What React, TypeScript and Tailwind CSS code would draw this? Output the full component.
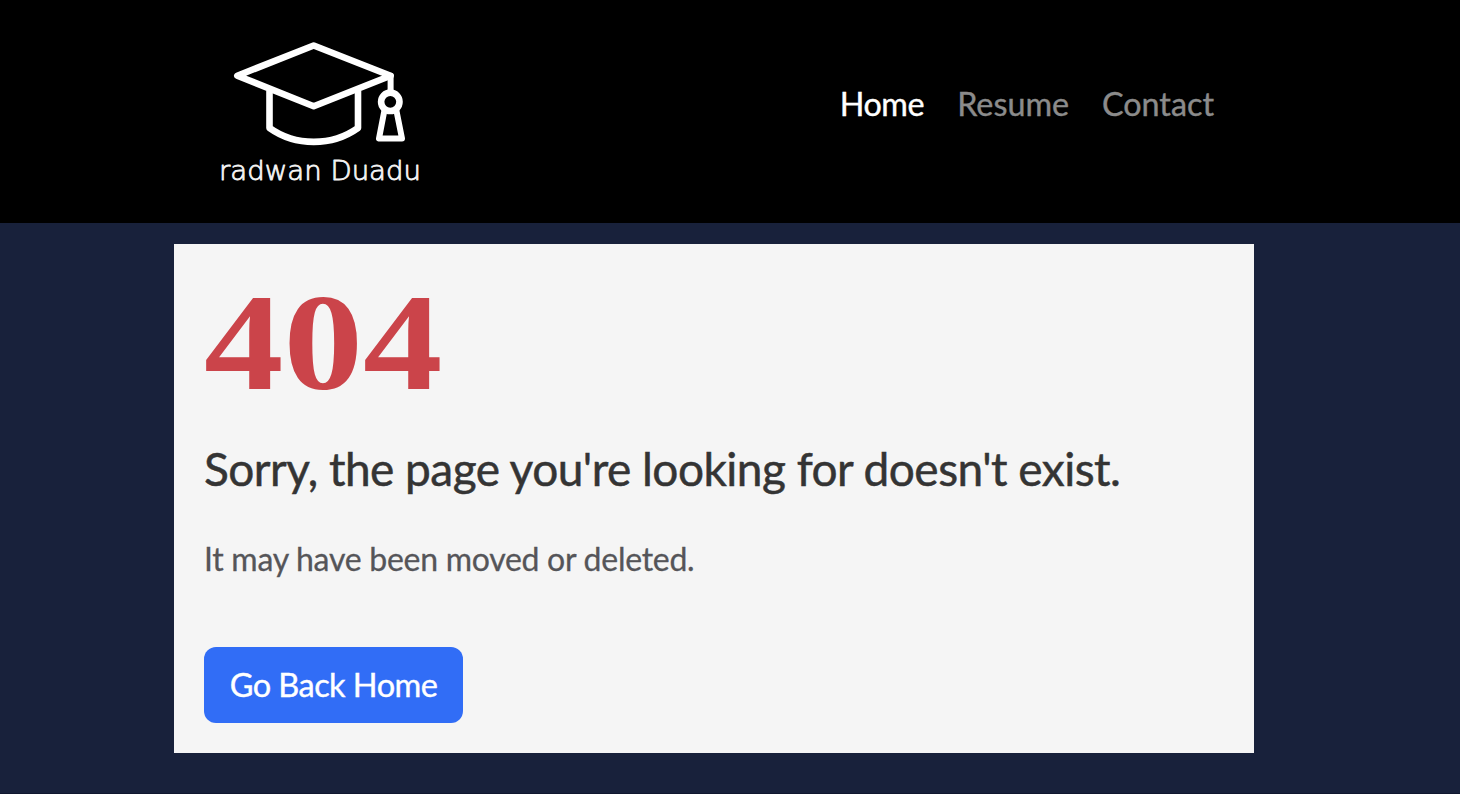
import React from "react";

function Logo() {
  return (
    <svg className="h-[160px] w-[220px]" viewBox="0 0 220 160" fill="none" stroke="#fff" strokeWidth="6.6" strokeLinejoin="round" strokeLinecap="round" role="img">
      <path d="M27.300 45.700 103.700 15.500 180.600 45.700 103.700 76.200Z" />
      <path d="M180.600 45.700v16" strokeWidth="6" />
      <path d="M59.500 61v37c26 18.500 62.500 18.500 88.500 0V61" strokeLinecap="butt" />
      <circle cx="180.300" cy="71.800" r="9.200" />
      <path d="M174.300 81 169 108.500h23L186.500 81" strokeWidth="6" />
      <text x="9" y="149.500" fill="#f4f4f4" stroke="#f4f4f4" strokeWidth="0.8" fontFamily="DejaVu Sans, sans-serif" fontWeight="200" fontSize="26" textLength="202" lengthAdjust="spacingAndGlyphs">
        radwan Duadu
      </text>
    </svg>
  );
}

export default function App() {
  return (
    <div className="min-h-[794px] border-b border-[#10172f] bg-[#18213b] font-['Lato',sans-serif]">
      <header className="h-[223px] bg-black">
        <div className="ml-[174px] flex w-[1080px] items-start justify-between pt-[30px] pr-[40px] pl-[36px]">
          <Logo />
          <nav className="flex gap-[33px] pt-[49px] text-[32.3px] leading-[50px] text-[#8b8b8b] [-webkit-text-stroke:0.4px_currentColor]">
            <a href="#" className="tracking-[-0.4px] text-white">Home</a>
            <a href="#">Resume</a>
            <a href="#">Contact</a>
          </nav>
        </div>
      </header>
      <main className="mt-[21px] ml-[174px] flex h-[509px] w-[1080px] flex-col items-start bg-[#f5f5f5] px-[30px]">
        <h1 className="mt-[20px] origin-left scale-x-[1.16] font-['Liberation_Serif',serif] text-[137px] leading-[158px] font-bold text-[#cb444a]">404</h1>
        <h2 className="mt-[19px] text-[46px] leading-[56px] tracking-[-0.52px] whitespace-nowrap text-[#343434] [-webkit-text-stroke:0.5px_currentColor]">Sorry, the page you're looking for doesn't exist.</h2>
        <p className="mt-[37px] text-[32px] leading-[50px] tracking-[-0.27px] text-[#555559] [-webkit-text-stroke:0.3px_currentColor]">It may have been moved or deleted.</p>
        <a href="#" className="mt-[63px] flex h-[76px] w-[259px] items-center justify-center rounded-xl bg-[#316df6] text-[32.500px] tracking-[-0.54px] whitespace-nowrap text-white [-webkit-text-stroke:0.4px_currentColor]">Go Back Home</a>
      </main>
    </div>
  );
}
